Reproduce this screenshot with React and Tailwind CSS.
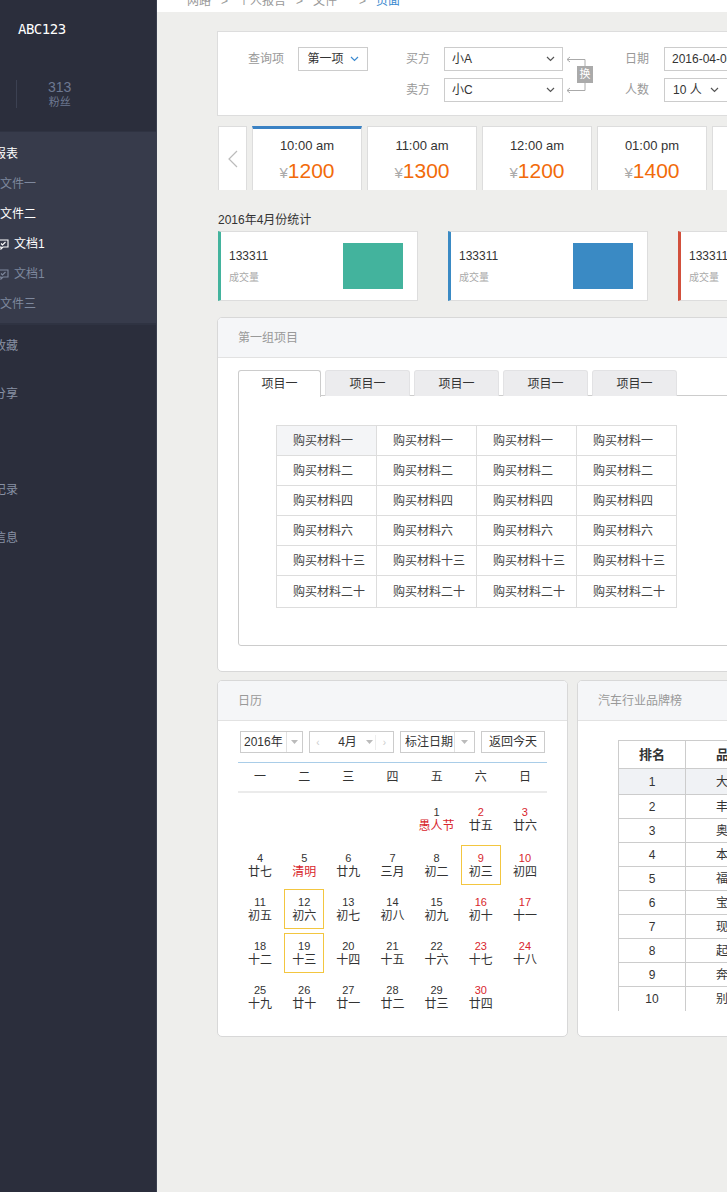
import React from "react";

const font = "font-['Liberation_Sans','Noto_Sans_CJK_SC',sans-serif]";

function Chevron({ className = "" }) {
  return (
    <svg className={className} width="9" height="6" viewBox="0 0 9 6" fill="none" stroke="currentColor" strokeWidth="1.2">
      <path d="M1 1l3.5 3.5L8 1" />
    </svg>
  );
}

function Caret() {
  return (
    <svg width="7" height="4" viewBox="0 0 7 4" className="text-[#bbb]">
      <path d="M0 0h7L3.5 4z" fill="currentColor" />
    </svg>
  );
}

function Sidebar() {
  const subs = [
    { t: "文件一", on: false },
    { t: "文件二", on: true },
    { t: "文档1", on: true, icon: true },
    { t: "文档1", on: false, icon: true },
    { t: "文件三", on: false },
  ];
  const rest = ["收藏", "分享", "", "记录", "信息"];
  return (
    <div className="w-[157px] shrink-0 h-full bg-[#2b2e3c] border-r border-[#3a3f4f] overflow-hidden text-[12px]">
      <div className="h-[60px] pl-[18px] pt-[19px]">
        <span className="text-white text-[14px] font-['DejaVu_Sans_Mono',monospace] tracking-[-0.5px]">ABC123</span>
      </div>
      <div className="h-[71px] pt-[20px] flex">
        <div className="ml-[16px] w-px h-[28px] bg-[#3c4152]" />
        <div className="ml-[31px] flex flex-col items-center leading-[15px] text-[#6d7891]">
          <span className="text-[14px]">313</span>
          <span className="text-[11px]">粉丝</span>
        </div>
      </div>
      <div className="bg-[#373b4b] border-t-[1px] border-b-2 border-[#2f3342] pt-[7px] pb-[4px]">
        <div className="h-[30px] flex items-center -ml-[6px] text-white whitespace-nowrap">报表</div>
        {subs.map((s, i) => (
          <div key={i} className={`h-[30px] flex items-center whitespace-nowrap ${s.on ? "text-white" : "text-[#7e889d]"}`}>
            {s.icon ? (
              <span className="-ml-[3px] flex items-center gap-[5px]">
                <svg width="12" height="11" viewBox="0 0 12 11" fill="none" stroke="currentColor" strokeWidth="1.1">
                  <path d="M1 1h10v7H6l-2 2V8H1z" />
                  <path d="M4 4.5l1.5 1.5L8.5 3" />
                </svg>
                {s.t}
              </span>
            ) : (
              <span>{s.t}</span>
            )}
          </div>
        ))}
      </div>
      <div className="-mt-[3px]">
        {rest.map((t, i) => (
          <div key={i} className="h-[48px] flex items-center -ml-[6px] text-[#8891a4] whitespace-nowrap">
            {t}
          </div>
        ))}
      </div>
    </div>
  );
}

function SearchCard() {
  return (
    <div className="w-[560px] h-[85px] bg-white border border-[#dddddd] pl-[30px] pt-[15px] flex text-[12px]">
      <div className="flex items-center h-[24px]">
        <span className="text-[#999] w-[50px]">查询项</span>
        <div className="w-[70px] h-[24px] border border-[#ccc] flex items-center justify-center gap-[6px] text-[#333]">
          第一项 <Chevron className="text-[#3b8ad0]" />
        </div>
      </div>
      <div className="ml-[38px] flex flex-col gap-[7px]">
        {["买方:小A", "卖方:小C"].map((p) => {
          const [l, v] = p.split(":");
          return (
            <div key={l} className="flex items-center h-[24px]">
              <span className="text-[#999] w-[38px]">{l}</span>
              <div className="w-[119px] h-[24px] border border-[#ccc] flex items-center justify-between px-[7px] text-[#333]">
                {v} <Chevron className="text-[#555]" />
              </div>
            </div>
          );
        })}
      </div>
      <div className="relative w-[30px] h-[55px] ml-[2px]">
        <svg width="30" height="55" viewBox="0 0 30 55" fill="none" stroke="#aaa" strokeWidth="1">
          <path d="M2 12.5h18v31H2" />
          <path d="M5 10l-3 2.5 3 2.5M5 41l-3 2.5 3 2.5" />
        </svg>
        <span className="absolute left-[12px] top-[19px] w-[16px] h-[17px] bg-[#aaa] text-white text-[11px] leading-[17px] text-center">换</span>
      </div>
      <div className="ml-[30px] flex flex-col gap-[7px]">
        <div className="flex items-center h-[24px]">
          <span className="text-[#999] w-[39px]">日期</span>
          <div className="w-[120px] h-[24px] border border-[#ccc] flex items-center px-[7px] text-[#333]">2016-04-08</div>
        </div>
        <div className="flex items-center h-[24px]">
          <span className="text-[#999] w-[39px]">人数</span>
          <div className="w-[70px] h-[24px] border border-[#ccc] flex items-center gap-[8px] px-[8px] text-[#333]">
            10 人 <Chevron className="text-[#555]" />
          </div>
        </div>
      </div>
    </div>
  );
}

function TimeRow() {
  const items = [
    ["10:00 am", "1200"],
    ["11:00 am", "1300"],
    ["12:00 am", "1200"],
    ["01:00 pm", "1400"],
    ["02:00 pm", "1500"],
  ];
  return (
    <div className="flex gap-[5px] h-[64px] ml-[1px]">
      <div className="w-[29px] shrink-0 bg-white border border-[#ddd] border-b-0 flex items-center justify-center">
        <svg width="10" height="18" viewBox="0 0 10 18" fill="none" stroke="#bbb" strokeWidth="1.2">
          <path d="M9 1L1 9l8 8" />
        </svg>
      </div>
      {items.map(([t, p], i) => (
        <div
          key={i}
          className={`w-[110px] shrink-0 bg-white border border-[#ddd] border-b-0 flex flex-col items-center ${
            i === 0 ? "border-t-[3px] border-t-[#3b82c4] pt-[8px]" : "pt-[10px]"
          }`}
        >
          <span className="text-[13px] text-[#333] leading-[18px]">{t}</span>
          <span className="mt-[3px] flex items-baseline leading-[26px]">
            <span className="text-[15px] text-[#aaa]">¥</span>
            <span className="text-[21px] text-[#f26b0a]">{p}</span>
          </span>
        </div>
      ))}
    </div>
  );
}

function Stats() {
  const cards = [
    ["border-l-[#43b39d]", "bg-[#43b39d]"],
    ["border-l-[#3a8ac4]", "bg-[#3a8ac4]"],
    ["border-l-[#d2503c]", "bg-[#d2503c]"],
  ];
  return (
    <div className="ml-[1px]">
      <div className="text-[12px] text-[#333] leading-[16px]">2016年4月份统计</div>
      <div className="flex gap-[30px] mt-[3px]">
        {cards.map(([b, bg], i) => (
          <div key={i} className={`w-[200px] h-[70px] shrink-0 bg-white border border-[#ddd] border-l-[3px] ${b} flex items-center pl-[8px] pr-[14px]`}>
            <div className="flex-1 flex flex-col">
              <span className="text-[12px] text-[#333] leading-[16px]">133311</span>
              <span className="text-[10px] text-[#aaa] mt-[7px] leading-[14px]">成交量</span>
            </div>
            <div className={`w-[60px] h-[46px] ${bg}`} />
          </div>
        ))}
      </div>
    </div>
  );
}

function Panel({ title, className = "", children }) {
  return (
    <div className={`bg-white border border-[#d8d8d8] rounded-[5px] overflow-hidden shrink-0 ${className}`}>
      <div className="h-[40px] bg-[#f5f6f8] border-b border-[#e2e2e2] flex items-center pl-[20px] text-[12px] text-[#999]">{title}</div>
      {children}
    </div>
  );
}

function GroupPanel() {
  const rows = ["一", "二", "四", "六", "十三", "二十"];
  return (
    <Panel title="第一组项目" className="w-[560px] h-[355px]">
      <div className="pl-[20px] pt-[12px]">
        <div className="flex gap-[4px] h-[26px] text-[12px] text-[#333]">
          <div className="w-[83px] bg-white border border-[#ccc] border-b-0 rounded-t-[3px] flex items-center justify-center relative z-10 h-[27px]">项目一</div>
          {[0, 1, 2, 3].map((i) => (
            <div key={i} className="w-[85px] bg-[#ececee] border border-[#e2e2e4] border-b-0 rounded-t-[3px] flex items-center justify-center">
              项目一
            </div>
          ))}
        </div>
        <div className="h-[251px] border border-[#ccc] rounded-bl-[3px] -mt-px pl-[37px] pt-[29px]">
          <table className="border-collapse text-[12px] text-[#444]">
            <tbody>
              {rows.map((r, ri) => (
                <tr key={ri}>
                  {[0, 1, 2, 3].map((c) => (
                    <td
                      key={c}
                      className={`w-[100px] border border-[#ddd] pl-[16px] whitespace-nowrap ${ri === 5 ? "h-[32px]" : "h-[30px]"} ${
                        ri === 0 && c === 0 ? "bg-[#f4f5f7]" : ""
                      }`}
                    >
                      购买材料{r}
                    </td>
                  ))}
                </tr>
              ))}
            </tbody>
          </table>
        </div>
      </div>
    </Panel>
  );
}

const weeks = [
  [null, null, null, null, ["1", "愚人节", 0, 1], ["2", "廿五", 1], ["3", "廿六", 1]],
  [["4", "廿七"], ["5", "清明", 0, 1], ["6", "廿九"], ["7", "三月"], ["8", "初二"], ["9", "初三", 1, 0, 1], ["10", "初四", 1]],
  [["11", "初五"], ["12", "初六", 0, 0, 1], ["13", "初七"], ["14", "初八"], ["15", "初九"], ["16", "初十", 1], ["17", "十一", 1]],
  [["18", "十二"], ["19", "十三", 0, 0, 1], ["20", "十四"], ["21", "十五"], ["22", "十六"], ["23", "十七", 1], ["24", "十八", 1]],
  [["25", "十九"], ["26", "廿十"], ["27", "廿一"], ["28", "廿二"], ["29", "廿三"], ["30", "廿四", 1], null],
];

function CalendarPanel() {
  return (
    <Panel title="日历" className="w-[351px] h-[357px]">
      <div className="px-[20px] pt-[10px]">
        <div className="flex gap-[6px] h-[22px] text-[12px] text-[#333] pl-[2px] whitespace-nowrap">
          <div className="w-[63px] border border-[#ccc] flex items-center">
            <span className="flex-1 pl-[3px]">2016年</span>
            <span className="w-[16px] h-full border-l border-[#e2e2e2] flex items-center justify-center"><Caret /></span>
          </div>
          <div className="w-[85px] border border-[#ccc] flex items-center text-[#333]">
            <span className="w-[16px] text-center text-[#ccc] text-[10px]">‹</span>
            <span className="flex-1 text-center pl-[6px]">4月</span>
            <span className="w-[12px] flex justify-center"><Caret /></span>
            <span className="w-[18px] text-center text-[#ccc] text-[10px] border-l border-[#eee]">›</span>
          </div>
          <div className="w-[75px] border border-[#ccc] flex items-center">
            <span className="flex-1 pl-[4px]">标注日期</span>
            <span className="w-[20px] h-full border-l border-[#e2e2e2] flex items-center justify-center"><Caret /></span>
          </div>
          <div className="w-[64px] border border-[#ccc] flex items-center justify-center">返回今天</div>
        </div>
        <div className="mt-[9px] border-t border-[#a9cde8]">
          <div className="grid grid-cols-7 h-[30px] items-center text-[12px] text-[#333] border-b-2 border-[#ebebeb]">
            {["一", "二", "三", "四", "五", "六", "日"].map((d) => (
              <span key={d} className="text-center">{d}</span>
            ))}
          </div>
          <div className="pt-[6px]">
            {weeks.map((w, wi) => (
              <div key={wi} className={`grid grid-cols-7 ${wi === 0 ? "h-[46px]" : "h-[44px]"}`}>
                {w.map((d, di) => (
                  <div key={di} className="flex justify-center items-start">
                    {d && (
                      <div className={`w-[40px] h-[40px] flex flex-col items-center justify-center leading-[14px] ${d[4] ? "border border-[#f3c640]" : ""}`}>
                        <span className={`text-[11px] ${d[2] ? "text-[#d8262c]" : "text-[#333]"}`}>{d[0]}</span>
                        <span className={`text-[12px] ${d[3] ? "text-[#d8262c]" : "text-[#333]"}`}>{d[1]}</span>
                      </div>
                    )}
                  </div>
                ))}
              </div>
            ))}
          </div>
        </div>
      </div>
    </Panel>
  );
}

function BrandPanel() {
  const brands = ["大众", "丰田", "奥迪", "本田", "福特", "宝马", "现代", "起亚", "奔驰", "别克"];
  return (
    <Panel title="汽车行业品牌榜" className="w-[351px] h-[357px]">
      <div className="pl-[40px] pt-[19px]">
        <table className="border-collapse text-[12px] text-[#333]">
          <thead>
            <tr className="h-[28px]">
              <th className="w-[67px] border border-[#ccc] font-bold text-[13px]">排名</th>
              <th className="w-[200px] border border-[#ccc] font-bold text-[13px] text-left pl-[30px]">品牌</th>
            </tr>
          </thead>
          <tbody>
            {brands.map((b, i) => (
              <tr key={i} className={`h-[24px] ${i === 0 ? "bg-[#f0f2f5] h-[26px]" : ""}`}>
                <td className={`border-x border-[#ccc] text-center ${i === 9 ? "" : "border-b"}`}>{i + 1}</td>
                <td className={`border-x border-[#ccc] pl-[30px] ${i === 9 ? "" : "border-b"}`}>{b}</td>
              </tr>
            ))}
          </tbody>
        </table>
      </div>
    </Panel>
  );
}

export default function App() {
  return (
    <div className={`w-[727px] h-[1192px] overflow-hidden bg-[#eeeeec] flex ${font}`}>
      <Sidebar />
      <div className="flex-1 min-w-0 overflow-hidden flex flex-col">
        <div className="h-[12px] bg-white overflow-hidden shrink-0">
          <div className="-mt-[8px] pl-[30px] flex gap-[10px] text-[12px] text-[#999] whitespace-nowrap">
            <span>网路</span><span>&gt;</span><span>个人报告</span><span>&gt;</span><span>文件一</span><span>&gt;</span>
            <span className="text-[#3b8ad0]">页面</span>
          </div>
        </div>
        <div className="pl-[60px] pt-[19px] flex flex-col w-[680px]">
          <SearchCard />
          <div className="mt-[10px]">
            <TimeRow />
          </div>
          <div className="mt-[22px]">
            <Stats />
          </div>
          <div className="mt-[16px]">
            <GroupPanel />
          </div>
          <div className="mt-[8px] flex gap-[9px]">
            <CalendarPanel />
            <BrandPanel />
          </div>
        </div>
      </div>
    </div>
  );
}
